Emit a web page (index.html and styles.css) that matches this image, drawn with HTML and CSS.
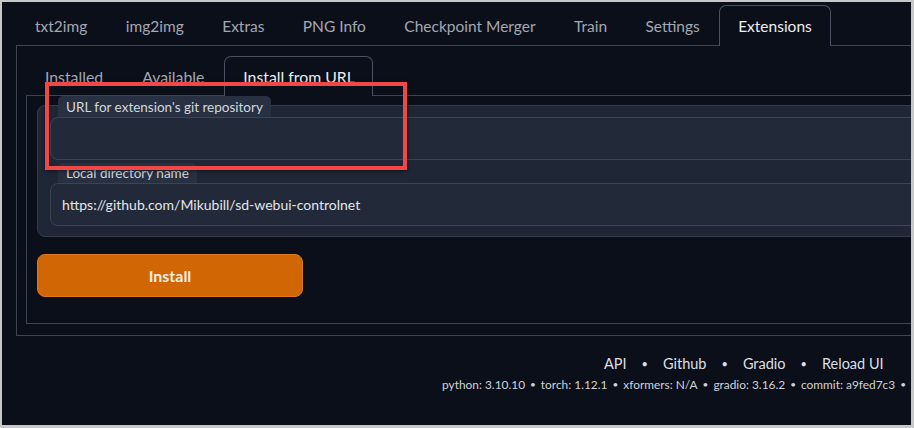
FILE: index.html
```html
<!DOCTYPE html>
<html lang="en">
<head>
<meta charset="utf-8">
<title>Extensions</title>
<link rel="stylesheet" href="styles.css">
</head>
<body>
<div class="frame">
  <div class="app">
    <nav class="tabs top-tabs">
      <span class="tab">txt2img</span>
      <span class="tab">img2img</span>
      <span class="tab">Extras</span>
      <span class="tab">PNG Info</span>
      <span class="tab">Checkpoint Merger</span>
      <span class="tab">Train</span>
      <span class="tab">Settings</span>
      <span class="tab selected">Extensions</span>
    </nav>
    <section class="panel outer-panel">
      <nav class="tabs inner-tabs">
        <span class="tab">Installed</span>
        <span class="tab">Available</span>
        <span class="tab selected">Install from URL</span>
      </nav>
      <div class="panel inner-panel">
        <div class="block">
          <div class="field first">
            <span class="label">URL for extension's git repository</span>
            <div class="input"></div>
          </div>
          <div class="field">
            <span class="label">Local directory name</span>
            <div class="input">https://github.com/Mikubill/sd-webui-controlnet</div>
          </div>
        </div>
        <button class="install">Install</button>
      </div>
    </section>
    <footer class="footer">
      <div class="links">
        <span>API</span><span class="dot">•</span><span>Github</span><span class="dot">•</span><span>Gradio</span><span class="dot">•</span><span>Reload UI</span>
      </div>
      <div class="versions">
        <span>python: 3.10.10</span><span class="dot">•</span><span>torch: 1.12.1</span><span class="dot">•</span><span>xformers: N/A</span><span class="dot">•</span><span>gradio: 3.16.2</span><span class="dot">•</span><span>commit: a9fed7c3</span><span class="dot">•</span>
      </div>
    </footer>
  </div>
  <div class="highlight"></div>
</div>
</body>
</html>
```

FILE: styles.css
```css
* { box-sizing: border-box; }
html, body {
  margin: 0;
  padding: 0;
  background: #c8c8c8;
  width: 914px;
  height: 428px;
  overflow: hidden;
}
.frame {
  position: relative;
  margin: 2px 3px 3px 2px;
  height: 423px;
  background: #0b0f19;
  overflow: hidden;
  font-family: "Lato", "Liberation Sans", sans-serif;
  color: #e5e7eb;
}
.app {
  width: 980px;
  padding: 3px 0 0 14px;
}
.tabs {
  display: flex;
  border-bottom: 1px solid #3d4452;
}
.tab {
  display: flex;
  align-items: center;
  border: 1px solid transparent;
  border-bottom: none;
  border-radius: 7px 7px 0 0;
  color: #a3a8b3;
  font-size: 15.5px;
  white-space: nowrap;
}
.top-tabs .tab { height: 40px; padding: 0 18.4px 0 18px; }
.inner-tabs .tab { height: 39px; padding: 0 19px 0 18px; font-size: 15.8px; }
.inner-tabs .tab.selected { padding: 0 17px 0 18px; }
.tab.selected {
  border-color: #4a5261;
  color: #eceef1;
  background: #0b0f19;
  margin-bottom: -1px;
}
.top-tabs .tab.selected { height: 41px; }
.inner-tabs .tab.selected { height: 40px; }
.panel {
  border: 1px solid #3d4452;
  border-top: none;
}
.outer-panel {
  padding: 10px 0 11px 9px;
}
.inner-panel {
  padding: 9px 0 26px 10px;
}
.block {
  background: #1f2636;
  border: 1px solid #343c4b;
  border-radius: 8px;
  padding: 0 12px 10px;
}
.field {
  display: flex;
  flex-direction: column;
  align-items: flex-start;
}
.field.first .label { margin-top: -10px; height: 21px; }
.field + .field .label { margin-top: 3px; }
.label {
  margin-left: 8px;
  height: 20px;
  padding: 0 8px;
  display: flex;
  align-items: center;
  background: #283142;
  border-radius: 5px 5px 0 0;
  font-size: 13.5px;
  color: #d4d7dd;
  white-space: nowrap;
}
.input {
  width: 100%;
  height: 43px;
  background: #222a3a;
  border: 1px solid #3c4454;
  border-radius: 8px;
  padding: 0 11px;
  display: flex;
  align-items: center;
  font-size: 14px;
  color: #e3e5e9;
}
.install {
  display: block;
  margin-top: 17px;
  width: 266px;
  height: 43px;
  border: 1px solid #e07a22;
  border-radius: 8px;
  background: #d16604;
  color: #fbeee2;
  font-family: "Lato", "Liberation Sans", sans-serif;
  font-weight: 700;
  font-size: 16px;
}
.footer {
  padding-top: 17px;
}
.footer .links {
  display: flex;
  align-items: center;
  padding-left: 588px;
  height: 20px;
  font-size: 14.5px;
  color: #dcdfe4;
}
.footer .links .dot { margin: 0 15px; font-size: 11px; }
.footer .versions {
  display: flex;
  align-items: center;
  padding-left: 426px;
  margin-top: 2px;
  height: 18px;
  font-size: 11.9px;
  color: #cfd2d8;
  white-space: nowrap;
}
.footer .versions .dot { margin: 0 5px; font-size: 10px; }
.highlight {
  position: absolute;
  left: 43px;
  top: 80px;
  width: 362px;
  height: 88px;
  border: 4px solid #f04747;
  box-shadow: 0 1px 4px rgba(0,0,0,0.5);
}
```
